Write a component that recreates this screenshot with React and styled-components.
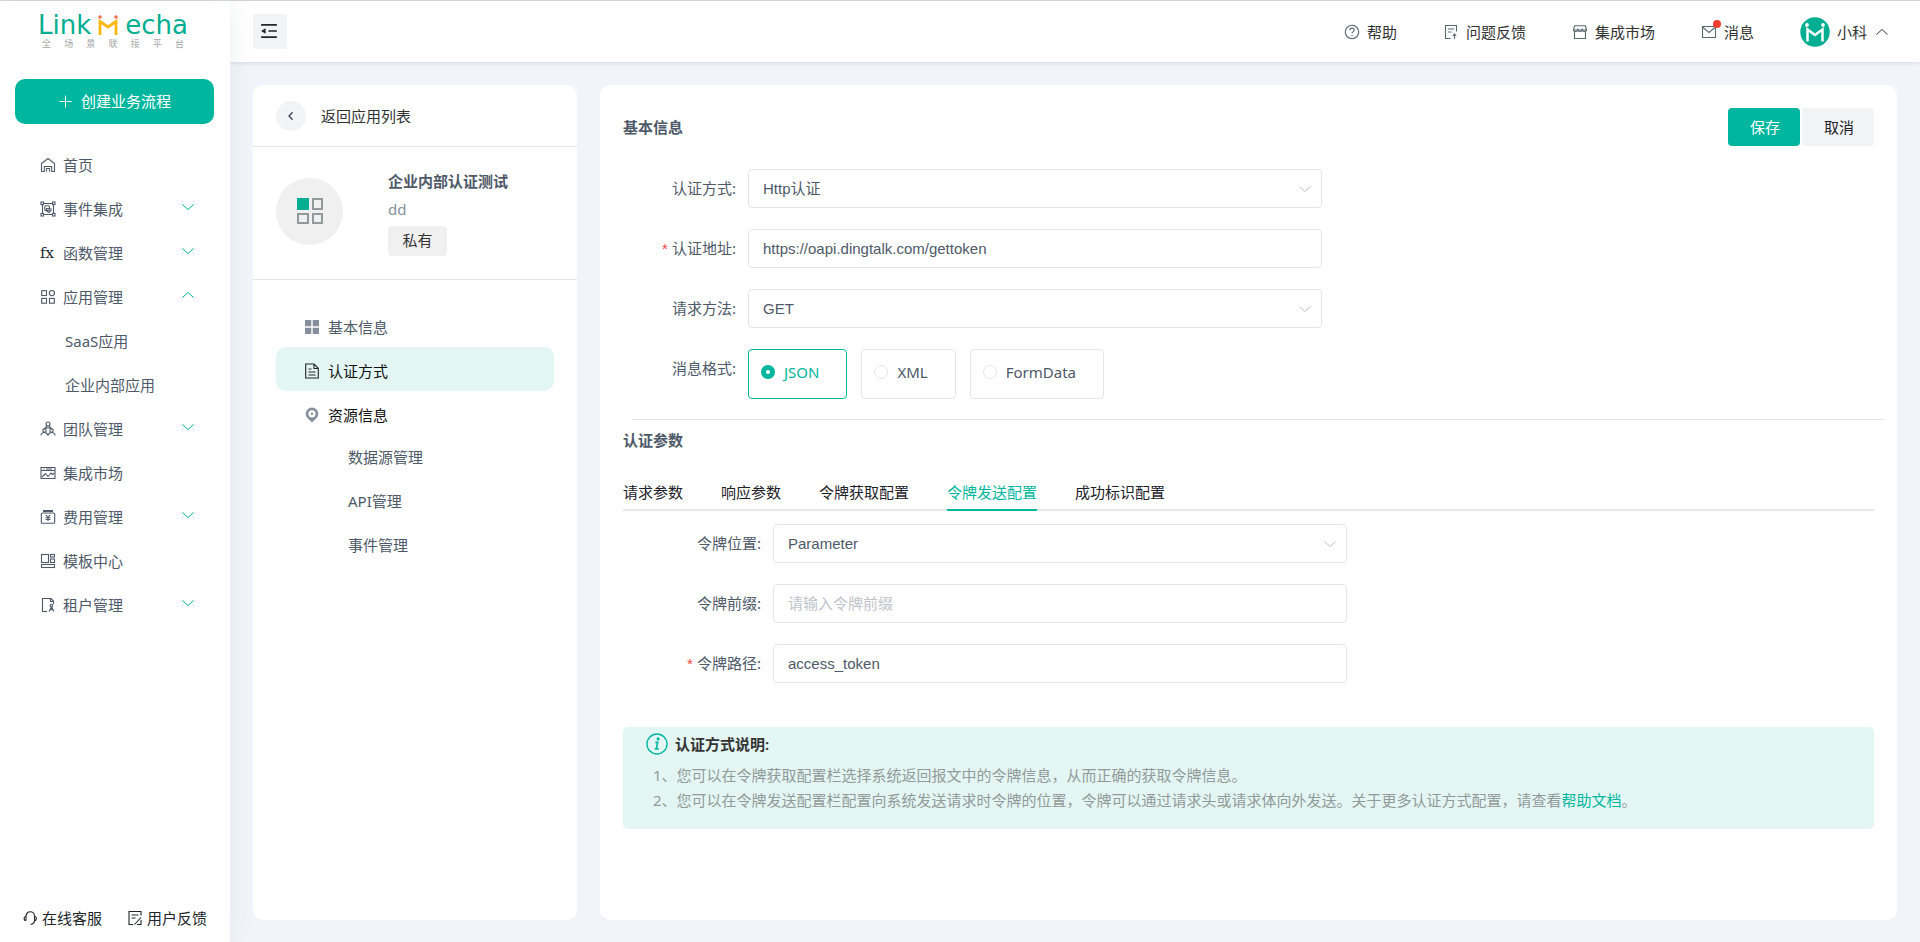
// Import: Dependencies
import React, { useState } from "react";
import styled, { createGlobalStyle } from "styled-components";

// Data: Sidebar menu
const MENU = [
  { label: "首页", icon: "home" },
  { label: "事件集成", icon: "event", arrow: "down" },
  { label: "函数管理", icon: "fx", arrow: "down" },
  {
    label: "应用管理",
    icon: "apps",
    arrow: "up",
    children: ["SaaS应用", "企业内部应用"],
  },
  { label: "团队管理", icon: "team", arrow: "down" },
  { label: "集成市场", icon: "market" },
  { label: "费用管理", icon: "cost", arrow: "down" },
  { label: "模板中心", icon: "template" },
  { label: "租户管理", icon: "tenant", arrow: "down" },
];

// Data: Header links
const HEADER_LINKS = [
  { label: "帮助", icon: "help" },
  { label: "问题反馈", icon: "report" },
  { label: "集成市场", icon: "shop" },
  { label: "消息", icon: "mail", dot: true },
];

// Data: Tabs
const TABS = [
  "请求参数",
  "响应参数",
  "令牌获取配置",
  "令牌发送配置",
  "成功标识配置",
];

const FORMATS = ["JSON", "XML", "FormData"];

// Icons: drawn on a 16px grid
const ICONS = {
  home: (
    <path d="M1.5 6.5 8 1.5l6.5 5v8h-2.8v-5H4.3v5H1.5zM6.5 14.5v-3h3v3" />
  ),
  event: (
    <>
      <path d="M3 2.5h10M3 13.5h10M2.5 3v10M13.5 3v10" />
      <rect x="1" y="1" width="2.5" height="2.5" />
      <rect x="12.5" y="1" width="2.5" height="2.5" />
      <rect x="1" y="12.5" width="2.5" height="2.5" />
      <rect x="12.5" y="12.5" width="2.5" height="2.5" />
      <rect x="4.8" y="4.8" width="4.6" height="4.6" rx="1" />
      <path d="M11 7v2.5l-2 2L6.5 10V7.5H9" />
    </>
  ),
  apps: (
    <>
      <rect x="1.7" y="1.7" width="4.8" height="4.8" />
      <circle cx="11.9" cy="4.1" r="2.6" />
      <rect x="1.7" y="9.4" width="4.8" height="4.8" />
      <rect x="9.5" y="9.4" width="4.8" height="4.8" />
    </>
  ),
  team: (
    <>
      <circle cx="8" cy="3" r="2" />
      <path d="M6.7 5 3.5 9M9.3 5l3.2 4M5.5 7.5l2.5-1 2.5 1" />
      <circle cx="4.5" cy="9.5" r="1.7" />
      <circle cx="11.5" cy="9.5" r="1.7" />
      <path d="M1 14.5c0-2 1.5-3 3.5-3s3 1 3.5 3c.5-2 1.5-3 3.5-3s3.5 1 3.5 3" />
    </>
  ),
  market: (
    <>
      <path d="M1 2.5h14v11H1zM1 5.5h14M3.5 4h1M6 4h6" />
      <path d="m2 12 3.5-3.5 2.5 3 3-3.5 1.5 1.5 2-1.5" />
    </>
  ),
  cost: (
    <>
      <path d="M3 2h10" strokeWidth="2" />
      <rect x="1.3" y="4" width="13.4" height="10.3" rx="1" />
      <path d="m6 6 2 2.5L10 6M8 8.5V12M5.5 8.7h5M5.5 10.5h5" />
    </>
  ),
  template: (
    <>
      <rect x="1.5" y="1.5" width="7" height="8" />
      <rect x="10.5" y="1.5" width="4" height="2.5" />
      <rect x="10.5" y="6" width="4" height="3.5" />
      <rect x="1.5" y="11.5" width="13" height="3" />
    </>
  ),
  tenant: (
    <>
      <path d="M7 14.5H2.5v-13H11L13.5 4v3M10.5 1.5v3h3" />
      <circle cx="11.5" cy="8.7" r="1.3" />
      <path d="M11.5 10 9 14.5M11.5 10l2.5 4.5M9.5 12.8h4" />
    </>
  ),
  help: (
    <>
      <circle cx="8" cy="8" r="6.7" />
      <path d="M5.8 6.3c0-3 4.4-2.8 4.4-.2 0 1.5-2.2 1.5-2.2 3.2M8 11v1.2" />
    </>
  ),
  report: (
    <path d="M7.5 14.5h-5v-13h11v6M5 5h6M5 8h3.5M11.5 15v-4.5M9.800 11.8l1.7-1.7 1.7 1.7" />
  ),
  shop: (
    <>
      <path d="M2.5 1.8h11l1 4.2h-13zM2.5 7.5v7h11v-7" />
      <path d="M1.5 6c.5 2 3.5 2 4.3 0M5.8 6c.8 2 3.6 2 4.4 0M10.2 6c.8 2 3.8 2 4.3 0" />
      <path d="M5.8 6V4.5M10.2 6V4.5" />
    </>
  ),
  mail: <path d="M1.5 2.5h13v11h-13zM1.5 3 8 8.5 14.5 3" />,
  service: (
    <>
      <path d="M4 10.5V6a4.2 4.2 0 0 1 8.5 0v4.5c0 2.5-1.5 3.5-4 4" />
      <path d="M4 6.5c-2.500 0-2.500 4 0 4M12.5 6.5c2.5 0 2.5 4 0 4" />
    </>
  ),
  feedback: (
    <path d="M6 14.5H2v-13h12v4M14 10v4.5h-4M4.5 5h7M4.5 8h4M7.5 14.5l6.5-7" />
  ),
  grid: (
    <path
      d="M1 1h6.3v6.3H1zM8.7 1H15v6.3H8.7zM1 8.7h6.3V15H1zM8.7 8.7H15V15H8.7z"
      fill="currentColor"
      stroke="none"
    />
  ),
  document: (
    <>
      <path d="M1.7 1h8.3l4.3 4.3V15H1.7zM10 1v4.5h4.3" />
      <path d="M4.5 6h3M4.5 9h7M4.5 12h7" />
    </>
  ),
  pin: (
    <path
      d="M8 15.5 3.3 11A6.3 6.3 0 1 1 12.7 11zM8 3.2a3.6 3.6 0 1 0 0 7.2 3.6 3.6 0 0 0 0-7.2zM8 5.6a1.2 1.2 0 1 1 0 2.4 1.2 1.2 0 0 1 0-2.4z"
      fill="currentColor"
      stroke="none"
      fillRule="evenodd"
    />
  ),
  info: (
    <>
      <circle cx="8" cy="8" r="7.3" strokeWidth="1" />
      <path d="M6.8 6.8h1.7l-1 4.8h1.8M6.3 11.6h1.2" strokeWidth="1.2" />
      <circle cx="8.8" cy="4.3" r=".6" fill="currentColor" />
    </>
  ),
  down: <path d="m2.5 5.5 5.5 5 5.5-5" strokeWidth="1" />,
  up: <path d="m2.5 10.5 5.5-5 5.5 5" strokeWidth="1" />,
  left: <path d="M10 3 5.5 8l4.5 5" strokeWidth="2.2" />,
  plus: <path d="M8 1.5v13M1.5 8h13" />,
  fold: (
    <>
      <path d="M1 2.5h14M7.5 8H15M1 13.5h14" strokeWidth="1.5" />
      <path d="M1 8l4-2.5v5z" fill="currentColor" stroke="none" />
    </>
  ),
};

// UI: Icon
function Icon({ name, size = 16 }) {
  return (
    <IconSvg viewBox="0 0 16 16" width={size} height={size} aria-hidden="true">
      {ICONS[name]}
    </IconSvg>
  );
}

// UI: LogoMark
function LogoMark() {
  return (
    <svg viewBox="0 0 22 22" width="22" height="22" aria-hidden="true">
      <path
        d="M3 21V7.5l8 5.5 8-5.5V21"
        fill="none"
        stroke="#fdb813"
        strokeWidth="2.8"
      />
      <circle cx="3" cy="3" r="1.8" fill="#f36f56" />
      <circle cx="19" cy="3" r="1.8" fill="#f36f56" />
    </svg>
  );
}

// UI: Avatar
function Avatar() {
  return (
    <svg viewBox="0 0 30 30" width="30" height="30" aria-hidden="true">
      <circle cx="15" cy="15" r="14.7" fill="#00ae91" />
      <path
        d="M7.5 24.5v-12l7.5 5.5 7.5-5.5v12"
        fill="none"
        stroke="#ffffff"
        strokeWidth="2.5"
      />
      <circle cx="7" cy="8" r="1.9" fill="#ffffff" />
      <circle cx="23" cy="8" r="1.9" fill="#ffffff" />
    </svg>
  );
}

// UI: Sidebar
function Sidebar() {
  return (
    <SidebarContainer>
      <Logo href="#">
        <LogoName>
          Link
          <LogoMark />
          echa
        </LogoName>
        <LogoSlogan>
          {"全场景联接平台".split("").map((char) => (
            <span key={char}>{char}</span>
          ))}
        </LogoSlogan>
      </Logo>

      <CreateButton type="button">
        <Icon name="plus" size={15} />
        创建业务流程
      </CreateButton>

      <Menu>
        {MENU.map((item) => (
          <React.Fragment key={item.label}>
            <MenuItem href="#">
              {item.icon === "fx" ? (
                <FxIcon>fx</FxIcon>
              ) : (
                <Icon name={item.icon} />
              )}
              <span>{item.label}</span>
              {item.arrow && (
                <MenuArrow>
                  <Icon name={item.arrow} />
                </MenuArrow>
              )}
            </MenuItem>
            {item.children?.map((child) => (
              <SubMenuItem href="#" key={child}>
                {child}
              </SubMenuItem>
            ))}
          </React.Fragment>
        ))}
      </Menu>

      <SidebarFooter>
        <FooterLink href="#">
          <Icon name="service" />
          在线客服
        </FooterLink>
        <FooterLink href="#">
          <Icon name="feedback" />
          用户反馈
        </FooterLink>
      </SidebarFooter>
    </SidebarContainer>
  );
}

// UI: Header
function Header() {
  return (
    <HeaderContainer>
      <FoldButton type="button" aria-label="收起菜单">
        <Icon name="fold" size={18} />
      </FoldButton>

      <HeaderRight>
        {HEADER_LINKS.map((link) => (
          <HeaderLink href="#" key={link.label}>
            <HeaderLinkIcon>
              <Icon name={link.icon} />
              {link.dot && <Dot />}
            </HeaderLinkIcon>
            {link.label}
          </HeaderLink>
        ))}
        <UserButton type="button">
          <Avatar />
          小科
          <Icon name="up" />
        </UserButton>
      </HeaderRight>
    </HeaderContainer>
  );
}

// UI: AppPanel
function AppPanel() {
  return (
    <AppPanelContainer>
      <BackRow>
        <BackButton type="button" aria-label="返回">
          <Icon name="left" size={12} />
        </BackButton>
        返回应用列表
      </BackRow>

      <AppSummary>
        <AppLogo>
          <svg viewBox="0 0 28 28" width="28" height="28" aria-hidden="true">
            <path d="M1 1h12v12H1z" fill="#00ae91" />
            <path
              d="M17 2h9v10h-9zM2 17h10v9H2zM17 17h9v9h-9z"
              fill="none"
              stroke="#929a99"
              strokeWidth="2"
            />
          </svg>
        </AppLogo>
        <div>
          <AppName>企业内部认证测试</AppName>
          <AppDescription>dd</AppDescription>
          <AppTag>私有</AppTag>
        </div>
      </AppSummary>

      <AppNav>
        <AppNavItem href="#">
          <Icon name="grid" />
          基本信息
        </AppNavItem>
        <AppNavItem href="#" $active>
          <Icon name="document" />
          认证方式
        </AppNavItem>
        <AppNavItem href="#" $open>
          <Icon name="pin" />
          资源信息
        </AppNavItem>
        <AppNavChild href="#">数据源管理</AppNavChild>
        <AppNavChild href="#">API管理</AppNavChild>
        <AppNavChild href="#">事件管理</AppNavChild>
      </AppNav>
    </AppPanelContainer>
  );
}

// UI: Field
function Field({ id, label, required, wide, children }) {
  return (
    <FieldRow>
      <FieldLabel htmlFor={id} $wide={wide}>
        {required && <Required>*</Required>}
        {label}:
      </FieldLabel>
      {children}
    </FieldRow>
  );
}

// UI: SelectField
function SelectField({ id, options }) {
  return (
    <SelectWrap>
      <Select id={id}>
        {options.map((option) => (
          <option key={option}>{option}</option>
        ))}
      </Select>
      <Icon name="down" />
    </SelectWrap>
  );
}

// UI: AuthForm
function AuthForm() {
  const [format, setFormat] = useState("JSON");
  const [tab, setTab] = useState("令牌发送配置");

  return (
    <AuthFormContainer>
      <FormHeader>
        <SectionTitle>基本信息</SectionTitle>
        <FormActions>
          <Button type="button" $primary>
            保存
          </Button>
          <Button type="button">取消</Button>
        </FormActions>
      </FormHeader>

      <FieldList>
        <Field id="auth-type" label="认证方式">
          <SelectField id="auth-type" options={["Http认证"]} />
        </Field>
        <Field id="auth-url" label="认证地址" required>
          <Input
            id="auth-url"
            defaultValue="https://oapi.dingtalk.com/gettoken"
          />
        </Field>
        <Field id="auth-method" label="请求方法">
          <SelectField id="auth-method" options={["GET", "POST"]} />
        </Field>
        <Field id="format-JSON" label="消息格式">
          <RadioGroup>
            {FORMATS.map((item) => (
              <RadioBox key={item} $checked={format === item}>
                <Radio
                  id={`format-${item}`}
                  type="radio"
                  name="format"
                  checked={format === item}
                  onChange={() => setFormat(item)}
                />
                {item}
              </RadioBox>
            ))}
          </RadioGroup>
        </Field>
      </FieldList>

      <Divider />
      <SectionTitle>认证参数</SectionTitle>

      <TabList role="tablist">
        {TABS.map((item) => (
          <Tab
            key={item}
            type="button"
            role="tab"
            aria-selected={tab === item}
            $active={tab === item}
            onClick={() => setTab(item)}
          >
            {item}
          </Tab>
        ))}
      </TabList>

      <TabPanel>
        <Field id="token-place" label="令牌位置" wide>
          <SelectField id="token-place" options={["Parameter", "Header"]} />
        </Field>
        <Field id="token-prefix" label="令牌前缀" wide>
          <Input id="token-prefix" placeholder="请输入令牌前缀" />
        </Field>
        <Field id="token-path" label="令牌路径" required wide>
          <Input id="token-path" defaultValue="access_token" />
        </Field>
      </TabPanel>

      <Notice>
        <NoticeTitle>
          <Icon name="info" size={22} />
          认证方式说明:
        </NoticeTitle>
        <NoticeText>
          1、您可以在令牌获取配置栏选择系统返回报文中的令牌信息，从而正确的获取令牌信息。
        </NoticeText>
        <NoticeText>
          2、您可以在令牌发送配置栏配置向系统发送请求时令牌的位置，令牌可以通过请求头或请求体向外发送。关于更多认证方式配置，请查看
          <a href="#">帮助文档</a>。
        </NoticeText>
      </Notice>
    </AuthFormContainer>
  );
}

// UI: App
function App() {
  return (
    <Page>
      <GlobalStyle />
      <Sidebar />
      <Main>
        <Header />
        <Content>
          <AppPanel />
          <AuthForm />
        </Content>
      </Main>
    </Page>
  );
}

// Export: App
export default App;

// Styled: GlobalStyle
const GlobalStyle = createGlobalStyle`
  * {
    box-sizing: border-box;
  }

  body {
    background: #f1f5fa;
    color: #4e5969;
    font-family: "Noto Sans", "Noto Sans CJK SC", sans-serif;
    font-size: 15px;
    line-height: 22px;
    margin: 0;
  }

  a {
    color: inherit;
    text-decoration: none;
  }

  button,
  input,
  select {
    font: inherit;
    margin: 0;
  }

  button {
    border: none;
    cursor: pointer;
    padding: 0;
  }

  h2,
  p {
    margin: 0;
  }
`;

// Styled: IconSvg
const IconSvg = styled.svg`
  display: block;
  fill: none;
  flex: none;
  stroke: currentColor;
  stroke-width: 1.1;
`;

// Styled: Page
const Page = styled.div`
  border-top: 1px solid #d9d9d9;
  display: flex;
  min-height: 100vh;
`;

// Styled: SidebarContainer
const SidebarContainer = styled.aside`
  background: #ffffff;
  box-shadow: 0 0 24px rgba(0, 80, 70, 0.08);
  display: flex;
  flex: none;
  flex-direction: column;
  width: 230px;
  z-index: 1;
`;

// Styled: Logo
const Logo = styled.a`
  padding: 12px 42px 0 38px;
`;

// Styled: LogoName
const LogoName = styled.div`
  align-items: center;
  color: #00ae91;
  display: flex;
  font-family: "DejaVu Sans", sans-serif;
  font-size: 26px;
  justify-content: space-between;
  line-height: 24px;
`;

// Styled: LogoSlogan
const LogoSlogan = styled.div`
  color: #a6a6a6;
  display: flex;
  font-size: 9px;
  justify-content: space-between;
  line-height: 14px;
  padding: 0 4px;
`;

// Styled: CreateButton
const CreateButton = styled.button`
  align-items: center;
  background: #00b69e;
  border-radius: 10px;
  color: #ffffff;
  display: flex;
  gap: 8px;
  height: 45px;
  justify-content: center;
  margin: 28px 16px 0 15px;
  padding-bottom: 1px;
`;

// Styled: Menu
const Menu = styled.nav`
  display: flex;
  flex: 1;
  flex-direction: column;
  padding-top: 19px;
`;

// Styled: MenuItem
const MenuItem = styled.a`
  align-items: center;
  display: flex;
  gap: 7px;
  height: 44px;
  padding: 0 34px 0 40px;
`;

// Styled: FxIcon
const FxIcon = styled.span`
  color: #22262b;
  font-family: "DejaVu Serif", serif;
  font-size: 15px;
  width: 16px;
`;

// Styled: MenuArrow
const MenuArrow = styled.span`
  color: #00b69e;
  margin-left: auto;
  padding-bottom: 4px;
`;

// Styled: SubMenuItem
const SubMenuItem = styled.a`
  line-height: 44px;
  padding-left: 65px;
`;

// Styled: SidebarFooter
const SidebarFooter = styled.div`
  color: #22262b;
  display: flex;
  justify-content: space-between;
  padding: 12px 23px 13px 22px;
`;

// Styled: FooterLink
const FooterLink = styled.a`
  align-items: center;
  display: flex;
  gap: 4px;
`;

// Styled: Main
const Main = styled.div`
  display: flex;
  flex: 1;
  flex-direction: column;
  min-width: 0;
`;

// Styled: HeaderContainer
const HeaderContainer = styled.header`
  align-items: center;
  background: #ffffff;
  box-shadow: 0 1px 4px rgba(0, 21, 41, 0.12);
  display: flex;
  height: 61px;
  justify-content: space-between;
  padding: 0 30px 0 23px;
`;

// Styled: FoldButton
const FoldButton = styled.button`
  background: #f2f3f5;
  border-radius: 2px;
  color: #22262b;
  display: grid;
  height: 35px;
  padding: 0 2px 2px 0;
  place-items: center;
  width: 34px;
`;

// Styled: HeaderRight
const HeaderRight = styled.div`
  align-items: center;
  color: #333333;
  display: flex;
  gap: 46px;
`;

// Styled: HeaderLink
const HeaderLink = styled.a`
  align-items: center;
  display: flex;
  gap: 7px;
`;

// Styled: HeaderLinkIcon
const HeaderLinkIcon = styled.span`
  color: #5a6b70;
  position: relative;
`;

// Styled: Dot
const Dot = styled.span`
  background: #f03d2f;
  border-radius: 50%;
  height: 8px;
  position: absolute;
  right: -4px;
  top: -4px;
  width: 8px;
`;

// Styled: UserButton
const UserButton = styled.button`
  align-items: center;
  background: none;
  color: #333333;
  display: flex;
  gap: 7px;
`;

// Styled: Content
const Content = styled.div`
  display: flex;
  flex: 1;
  gap: 23px;
  padding: 23px 23px 22px;
`;

// Styled: Card
const Card = styled.section`
  background: #ffffff;
  border-radius: 10px;
`;

// Styled: AppPanelContainer
const AppPanelContainer = styled(Card)`
  flex: none;
  width: 324px;
`;

// Styled: BackRow
const BackRow = styled.div`
  align-items: center;
  border-bottom: 1px solid #e5e6eb;
  color: #333333;
  display: flex;
  gap: 15px;
  height: 62px;
  padding: 0 23px;
`;

// Styled: BackButton
const BackButton = styled.button`
  background: #f2f3f5;
  border-radius: 50%;
  color: #4e5969;
  display: grid;
  height: 30px;
  place-items: center;
  width: 30px;
`;

// Styled: AppSummary
const AppSummary = styled.div`
  align-items: center;
  border-bottom: 1px solid #e5e6eb;
  display: flex;
  gap: 45px;
  height: 133px;
  padding: 0 23px 4px;
`;

// Styled: AppLogo
const AppLogo = styled.div`
  background: #f0f0f0;
  border-radius: 50%;
  display: grid;
  height: 67px;
  place-items: center;
  width: 67px;
`;

// Styled: AppName
const AppName = styled.h2`
  font-size: 15px;
  font-weight: 700;
  line-height: 28px;
`;

// Styled: AppDescription
const AppDescription = styled.p`
  color: #86909c;
  line-height: 28px;
`;

// Styled: AppTag
const AppTag = styled.span`
  background: #f0f0f0;
  border-radius: 4px;
  color: #333333;
  display: block;
  line-height: 28px;
  margin-top: 3px;
  padding-bottom: 2px;
  text-align: center;
  width: 59px;
`;

// Styled: AppNav
const AppNav = styled.nav`
  display: flex;
  flex-direction: column;
  padding: 23px;
`;

// Styled: AppNavItem
const AppNavItem = styled.a`
  align-items: center;
  background: ${({ $active }) => ($active ? "#e3f6f4" : "transparent")};
  border-radius: 10px;
  color: ${({ $active, $open }) => ($active || $open ? "#111111" : "#4e5969")};
  display: flex;
  gap: 8px;
  height: 44px;
  padding: 4px 28px 0;

  & svg {
    color: ${({ $active }) => ($active ? "#222222" : "#86909c")};
  }
`;

// Styled: AppNavChild
const AppNavChild = styled.a`
  line-height: 44px;
  padding-left: 72px;
`;

// Styled: AuthFormContainer
const AuthFormContainer = styled(Card)`
  flex: 1;
  min-width: 0;
  padding: 23px;
`;

// Styled: FormHeader
const FormHeader = styled.div`
  align-items: center;
  display: flex;
  justify-content: space-between;
`;

// Styled: SectionTitle
const SectionTitle = styled.h2`
  font-size: 15px;
  font-weight: 600;
  line-height: 22px;
`;

// Styled: FormActions
const FormActions = styled.div`
  display: flex;
  gap: 2px;
`;

// Styled: Button
const Button = styled.button`
  background: ${({ $primary }) => ($primary ? "#00b69e" : "#f2f3f5")};
  border-radius: 4px;
  color: ${({ $primary }) => ($primary ? "#ffffff" : "#1d2129")};
  height: 38px;
  padding: 0 20px 0 22px;
`;

// Styled: FieldList
const FieldList = styled.div`
  display: flex;
  flex-direction: column;
  gap: 21px;
  padding-top: 23px;
`;

// Styled: FieldRow
const FieldRow = styled.div`
  align-items: flex-start;
  display: flex;
  gap: 12px;
`;

// Styled: FieldLabel
const FieldLabel = styled.label`
  flex: none;
  line-height: 39px;
  text-align: right;
  width: ${({ $wide }) => ($wide ? "138px" : "113px")};
`;

// Styled: Required
const Required = styled.span`
  color: #f5453f;
  font-family: "Liberation Sans", sans-serif;
  margin-right: 4px;
`;

// Styled: Input
const Input = styled.input`
  background: #ffffff;
  border: 1px solid #e5e6eb;
  border-radius: 4px;
  color: #4e5969;
  flex: 0 1 574px;
  font-family: "Liberation Sans", "Noto Sans CJK SC", sans-serif;
  height: 39px;
  min-width: 0;
  outline: none;
  padding: 0 14px;

  &:focus {
    border-color: #00b69e;
  }

  &::placeholder {
    color: #c0c4cc;
    opacity: 1;
  }
`;

// Styled: SelectWrap
const SelectWrap = styled.div`
  align-items: center;
  color: #c0c4cc;
  display: grid;
  flex: 0 1 574px;
  min-width: 0;

  & > * {
    grid-area: 1 / 1;
  }

  & svg {
    justify-self: end;
    margin-right: 9px;
    pointer-events: none;
  }
`;

// Styled: Select
const Select = styled.select`
  appearance: none;
  background: #ffffff;
  border: 1px solid #e5e6eb;
  border-radius: 4px;
  color: #4e5969;
  font-family: "Liberation Sans", "Noto Sans CJK SC", sans-serif;
  height: 39px;
  outline: none;
  padding: 0 14px;
  width: 100%;
`;

// Styled: RadioGroup
const RadioGroup = styled.div`
  display: flex;
  gap: 14px;
`;

// Styled: RadioBox
const RadioBox = styled.label`
  align-items: center;
  border: 1px solid ${({ $checked }) => ($checked ? "#00b69e" : "#e5e6eb")};
  border-radius: 4px;
  color: ${({ $checked }) => ($checked ? "#00b69e" : "#4e5969")};
  cursor: pointer;
  display: flex;
  gap: 9px;
  height: 50px;
  padding: 0 27px 4px 12px;
`;

// Styled: Radio
const Radio = styled.input`
  appearance: none;
  background: #ffffff;
  border: 1px solid #e5e6eb;
  border-radius: 50%;
  height: 14px;
  width: 14px;

  &:checked {
    border: 5px solid #00b69e;
  }
`;

// Styled: Divider
const Divider = styled.hr`
  border: none;
  border-top: 1px solid #e5e6eb;
  margin: 20px -9px 9px 9px;
`;

// Styled: TabList
const TabList = styled.div`
  border-bottom: 2px solid #e4e7ed;
  display: flex;
  gap: 38px;
  margin-top: 23px;
`;

// Styled: Tab
const Tab = styled.button`
  background: none;
  border-bottom: 2px solid ${({ $active }) => ($active ? "#00b69e" : "transparent")};
  color: ${({ $active }) => ($active ? "#00b69e" : "#1d2129")};
  height: 37px;
  margin-bottom: -2px;
`;

// Styled: TabPanel
const TabPanel = styled.div`
  display: flex;
  flex-direction: column;
  gap: 21px;
  padding-top: 13px;
`;

// Styled: Notice
const Notice = styled.div`
  background: #e3f6f4;
  border-radius: 5px;
  color: #929a99;
  margin-top: 44px;
  padding: 5px 23px 16px;
`;

// Styled: NoticeTitle
const NoticeTitle = styled.div`
  align-items: center;
  color: #333333;
  display: flex;
  font-weight: 600;
  gap: 7px;
  line-height: 24px;
  margin-bottom: 7px;

  & svg {
    color: #00b69e;
  }
`;

// Styled: NoticeText
const NoticeText = styled.p`
  line-height: 25px;
  padding-left: 7px;

  & a {
    color: #00b69e;
  }
`;
